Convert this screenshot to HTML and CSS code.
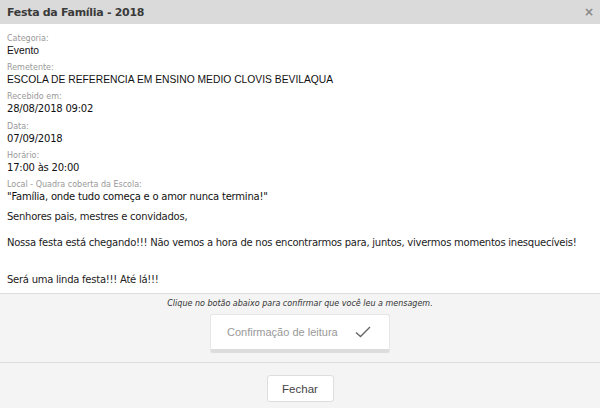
FILE: index.html
```html
<!DOCTYPE html>
<html lang="pt-BR">

<head>
    <meta charset="UTF-8">
    <title>Festa da Família - 2018</title>
    <link rel="stylesheet" href="styles.css">
</head>

<body>
    <div class="modal">
        <!-- Header -->
        <div class="modal-header">
            <h4 class="modal-title">Festa da Família - 2018</h4>
            <button class="close-btn">&times;</button>
        </div>
        <!-- Body -->
        <div class="modal-body">
            <div class="field">
                <div class="field-label">Categoria:</div>
                <div class="field-value arial">Evento</div>
            </div>
            <div class="field">
                <div class="field-label">Remetente:</div>
                <div class="field-value arial">ESCOLA DE REFERENCIA EM ENSINO MEDIO CLOVIS BEVILAQUA</div>
            </div>
            <div class="field">
                <div class="field-label">Recebido em:</div>
                <div class="field-value">28/08/2018 09:02</div>
            </div>
            <div class="field">
                <div class="field-label">Data:</div>
                <div class="field-value">07/09/2018</div>
            </div>
            <div class="field">
                <div class="field-label">Horário:</div>
                <div class="field-value">17:00 às 20:00</div>
            </div>
            <div class="field">
                <div class="field-label">Local - Quadra coberta da Escola:</div>
                <div class="field-value">"Família, onde tudo começa e o amor nunca termina!"</div>
            </div>
            <div class="message">
                <p>Senhores pais, mestres e convidados,</p>
                <p class="gap">Nossa festa está chegando!!! Não vemos a hora de nos encontrarmos para, juntos, vivermos momentos inesquecíveis!</p>
                <p>Será uma linda festa!!! Até lá!!!</p>
            </div>
        </div>
        <!-- Read confirmation -->
        <div class="confirm-area">
            <p class="confirm-hint">Clique no botão abaixo para confirmar que você leu a mensagem.</p>
            <button class="confirm-btn">
                <span>Confirmação de leitura</span>
                <svg width="16" height="12" viewBox="0 0 16 12"><path d="M1 6.5 L5.5 10.5 L15 1" fill="none" stroke="#666" stroke-width="1.4"/></svg>
            </button>
        </div>
        <!-- Footer -->
        <div class="modal-footer">
            <button class="close-footer-btn">Fechar</button>
        </div>
    </div>
</body>

</html>
```

FILE: styles.css
```css
html,
body {
    margin: 0;
    height: 100%;
}

body {
    font-family: "DejaVu Sans", Verdana, sans-serif;
    color: #222;
    background-color: #fff;
}

.modal {
    width: 600px;
    height: 408px;
    display: flex;
    flex-direction: column;
    overflow: hidden;
}

.modal-header {
    height: 24px;
    background-color: #dadada;
    display: flex;
    align-items: center;
    justify-content: space-between;
    padding: 0 7px;
    box-sizing: border-box;
}

.modal-title {
    margin: 0;
    font-size: 11px;
    letter-spacing: -0.3px;
    font-weight: bold;
    color: #3a3a3a;
}

.close-btn {
    border: none;
    background: none;
    padding: 0;
    font-family: "DejaVu Sans", sans-serif;
    font-size: 12px;
    font-weight: bold;
    color: #888;
    line-height: 1;
    margin-right: -1px;
}

.modal-body {
    padding: 10px 7px 0 7px;
    height: 269px;
    box-sizing: border-box;
    background-color: #fff;
    overflow: hidden;
}

.field {
    margin-bottom: 5.2px;
}

.field-label {
    font-size: 8px;
    line-height: 10px;
    color: #999;
}

.field-value {
    font-size: 10px;
    line-height: 14px;
    letter-spacing: -0.22px;
    color: #111;
}

.field-value.arial {
    font-family: "Liberation Sans", Arial, sans-serif;
    font-size: 10.3px;
    letter-spacing: 0;
}

.message {
    padding-top: 1px;
    font-size: 10px;
    line-height: 14px;
    letter-spacing: -0.25px;
    color: #222;
}

.message p {
    margin: 0 0 12px 0;
}

.message p.gap {
    margin-bottom: 23px;
}

.confirm-area {
    height: 69px;
    border-top: 1px solid #ddd;
    background-color: #f4f4f4;
    box-sizing: border-box;
    display: flex;
    flex-direction: column;
    align-items: center;
}

.confirm-hint {
    margin: 5px 0 5px 0;
    font-size: 8px;
    line-height: 10px;
    font-style: italic;
    color: #333;
}

.confirm-btn {
    width: 180px;
    height: 39px;
    display: flex;
    align-items: center;
    justify-content: space-between;
    padding: 0 18px 0 16px;
    box-sizing: border-box;
    background-color: #fff;
    border: 1px solid #e6e6e6;
    border-bottom: 4px solid #dcdcdc;
    border-radius: 3px;
    font-family: "Liberation Sans", Arial, sans-serif;
    font-size: 11px;
    color: #999;
}

.modal-footer {
    flex: 1;
    border-top: 1px solid #ddd;
    background-color: #f4f4f4;
    display: flex;
    justify-content: center;
    padding-top: 12px;
}

.close-footer-btn {
    width: 67px;
    height: 27px;
    background-color: #fff;
    border: 1px solid #ddd;
    border-radius: 3px;
    font-family: "Liberation Sans", Arial, sans-serif;
    font-size: 11.5px;
    color: #444;
}
```
